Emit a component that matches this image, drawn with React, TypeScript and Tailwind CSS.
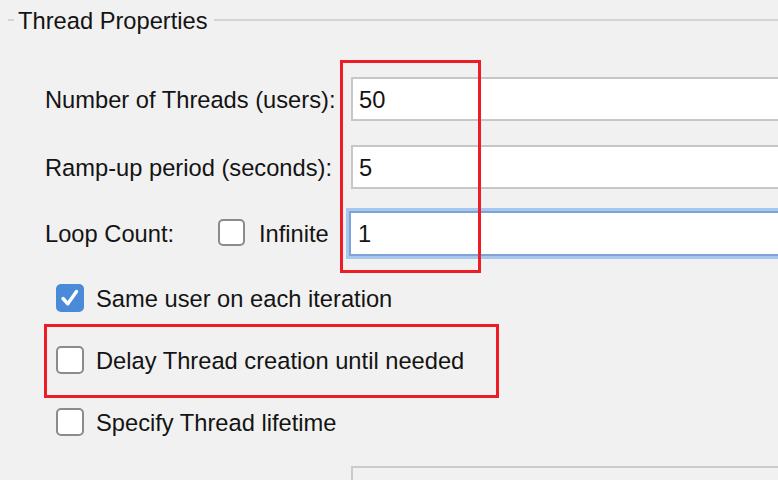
function CheckBox({ checked = false, size = 28 }: { checked?: boolean; size?: number }) {
  if (checked) {
    return (
      <div className="flex items-center justify-center w-[28px] h-[28px] rounded-[5px] bg-[#4b8ad9] shrink-0">
        <svg width="28" height="28" viewBox="0 0 28 28">
          <path d="M7 14.5 L11.8 19.8 L20.5 7.5" fill="none" stroke="white" strokeWidth="3.4" strokeLinecap="round" strokeLinejoin="round" />
        </svg>
      </div>
    );
  }
  return (
    <div
      className={
        size === 27
          ? "w-[27px] h-[27px] rounded-[5px] border-2 border-[#8b8b8b] bg-white shrink-0"
          : "w-[28px] h-[28px] rounded-[5px] border-2 border-[#8b8b8b] bg-white shrink-0"
      }
    />
  );
}

export default function App() {
  return (
    <div className="relative w-[778px] h-[480px] overflow-hidden bg-[#f1f1f1] font-['Liberation_Sans',Arial,sans-serif] text-[23.7px] text-[#141414]">
      {/* Titled border */}
      <div className="flex items-center h-[40px]">
        <div className="ml-[8px] w-[6px] h-[2px] bg-[#d4d4d4]" />
        <span className="ml-[4px] leading-none pt-[4px]">Thread Properties</span>
        <div className="ml-[6px] flex-1 h-[2px] bg-[#d4d4d4]" />
      </div>

      <div className="pl-[45px]">
        {/* Number of threads */}
        <div className="mt-[37px] flex items-center h-[44px]">
          <div className="w-[306px] leading-none pt-[4px]">Number of Threads (users):</div>
          <div className="flex-1 mr-[-20px] h-[44px] border-2 border-[#c7c7c7] bg-white pl-[6px] pt-[3px] flex items-center leading-none">
            50
          </div>
        </div>

        {/* Ramp-up */}
        <div className="mt-[24px] flex items-center h-[44px]">
          <div className="w-[306px] leading-none pt-[4px]">Ramp-up period (seconds):</div>
          <div className="flex-1 mr-[-20px] h-[44px] border-2 border-[#c7c7c7] bg-white pl-[6px] pt-[3px] flex items-center leading-none">
            5
          </div>
        </div>

        {/* Loop count */}
        <div className="mt-[22px] flex items-center h-[44px]">
          <div className="w-[304px] flex items-center">
            <div className="w-[173px] leading-none pt-[4px]">Loop Count:</div>
            <CheckBox size={27} />
            <span className="ml-[14px] leading-none pt-[4px]">Infinite</span>
          </div>
          <div className="flex-1 mr-[-20px] h-[45px] border-2 border-[#7fa3d4] bg-white pl-[7px] pt-[3px] flex items-center leading-none shadow-[0_0_0_3px_#a5c7f0]">
            1
          </div>
        </div>

        {/* Checkboxes */}
        <div className="ml-[11px] mt-[29px] flex items-center h-[28px]">
          <CheckBox checked />
          <span className="ml-[12px] leading-none pt-[4px]">Same user on each iteration</span>
        </div>
        <div className="ml-[11px] mt-[34px] flex items-center h-[28px]">
          <CheckBox />
          <span className="ml-[12px] leading-none pt-[4px]">Delay Thread creation until needed</span>
        </div>
        <div className="ml-[11px] mt-[34px] flex items-center h-[28px]">
          <CheckBox />
          <span className="ml-[12px] leading-none pt-[4px]">Specify Thread lifetime</span>
        </div>

        {/* Bottom panel */}
        <div className="ml-[306px] mt-[30px] mr-[-20px] h-[40px] border-2 border-[#cbcbcb] bg-[#f1f1f1]" />
      </div>

      {/* Red annotation boxes */}
      <div className="absolute left-[340px] top-[60px] w-[141px] h-[213px] border-[3px] border-[#ee1d25]" />
      <div className="absolute left-[44px] top-[324px] w-[455px] h-[74px] border-[3px] border-[#ee1d25]" />
    </div>
  );
}
